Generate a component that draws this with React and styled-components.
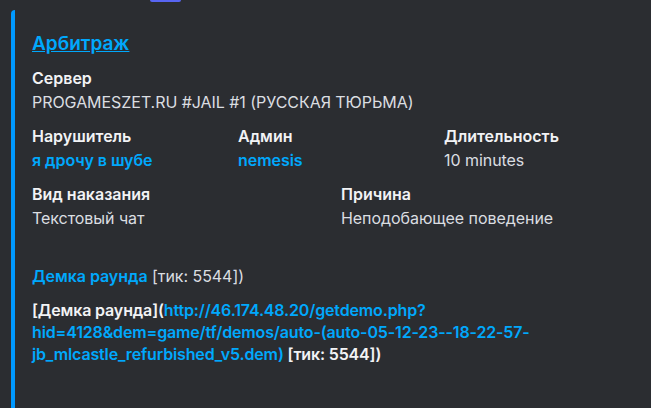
import React from 'react'
import styled, { createGlobalStyle } from 'styled-components'

const GlobalStyle = createGlobalStyle`
	html, body {
		margin: 0;
		padding: 0;
		background: #2b2d31;
	}
	body {
		font-family: Inter, "Noto Sans", "Liberation Sans", sans-serif;
		-webkit-font-smoothing: antialiased;
	}
`

const Page = styled.div`
	position: relative;
	width: 651px;
	height: 408px;
	overflow: hidden;
	background: #2b2d31;
	padding-top: 10px;
	padding-left: 11px;
	box-sizing: border-box;
`
const TopTab = styled.div`
	position: absolute;
	top: 0;
	left: 150px;
	width: 31px;
	height: 2px;
	border-radius: 0 0 2px 2px;
	background: #5865f2;
`
const Embed = styled.article`
	border-left: 4px solid #0099ff;
	border-top-left-radius: 4px;
	padding: 23px 0 40px 17px;
	min-height: 420px;
	box-sizing: border-box;
`
const Title = styled.a`
	display: block;
	font-size: 19px;
	font-weight: 600;
	line-height: 22px;
	color: #00a8fc;
	text-decoration: underline;
	cursor: pointer;
`
const Fields = styled.div`
	display: grid;
	grid-template-columns: repeat(12, 1fr);
	column-gap: 8px;
	row-gap: 12px;
	width: 610px;
	margin-top: 12px;
`
const Field = styled.div`
	grid-column: span ${props => props.span};
	min-width: 0;
`
const FieldName = styled.div`
	font-size: 16px;
	font-weight: 600;
	line-height: 22px;
	min-height: 22px;
	color: #f2f3f5;
	margin-bottom: 2px;
	letter-spacing: ${props => props.tight ? '-0.15px' : 'normal'};
`
const FieldValue = styled.div`
	font-size: 16px;
	font-weight: 400;
	line-height: 22px;
	color: #dbdee1;
	letter-spacing: -0.05px;
`
const Link = styled.span`
	color: #00a8fc;
	font-weight: ${props => props.bold ? 600 : 'inherit'};
	cursor: pointer;
`

const fields = [
	{ name: 'Сервер', value: 'PROGAMESZET.RU #JAIL #1 (РУССКАЯ ТЮРЬМА)', span: 12 },
	{ name: 'Нарушитель', value: <Link bold>я дрочу в шубе</Link>, span: 4 },
	{ name: 'Админ', value: <Link bold>nemesis</Link>, span: 4 },
	{ name: 'Длительность', value: '10 minutes', span: 4 },
	{ name: 'Вид наказания', value: 'Текстовый чат', span: 6 },
	{ name: 'Причина', value: 'Неподобающее поведение', span: 6 },
	{ name: '\u00a0', value: <><Link bold>Демка раунда</Link> [тик: 5544])</>, span: 12 },
	{
		name: <>[Демка раунда](<Link>http://46.174.48.20/getdemo.php?hid=4128&dem=game/tf/demos/auto-(auto-05-12-23--18-22-57-jb_mlcastle_refurbished_v5.dem)</Link> [тик: 5544])</>,
		value: null,
		span: 12,
		tight: true,
	},
]

const App = () => {
	return (
		<Page>
			<GlobalStyle />
			<TopTab />
			<Embed>
				<Title>Арбитраж</Title>
				<Fields>
					{fields.map((field, index) => (
						<Field span={field.span} key={index}>
							<FieldName tight={field.tight}>{field.name}</FieldName>
							{field.value && <FieldValue>{field.value}</FieldValue>}
						</Field>
					))}
				</Fields>
			</Embed>
		</Page>
	)
}

export default App
